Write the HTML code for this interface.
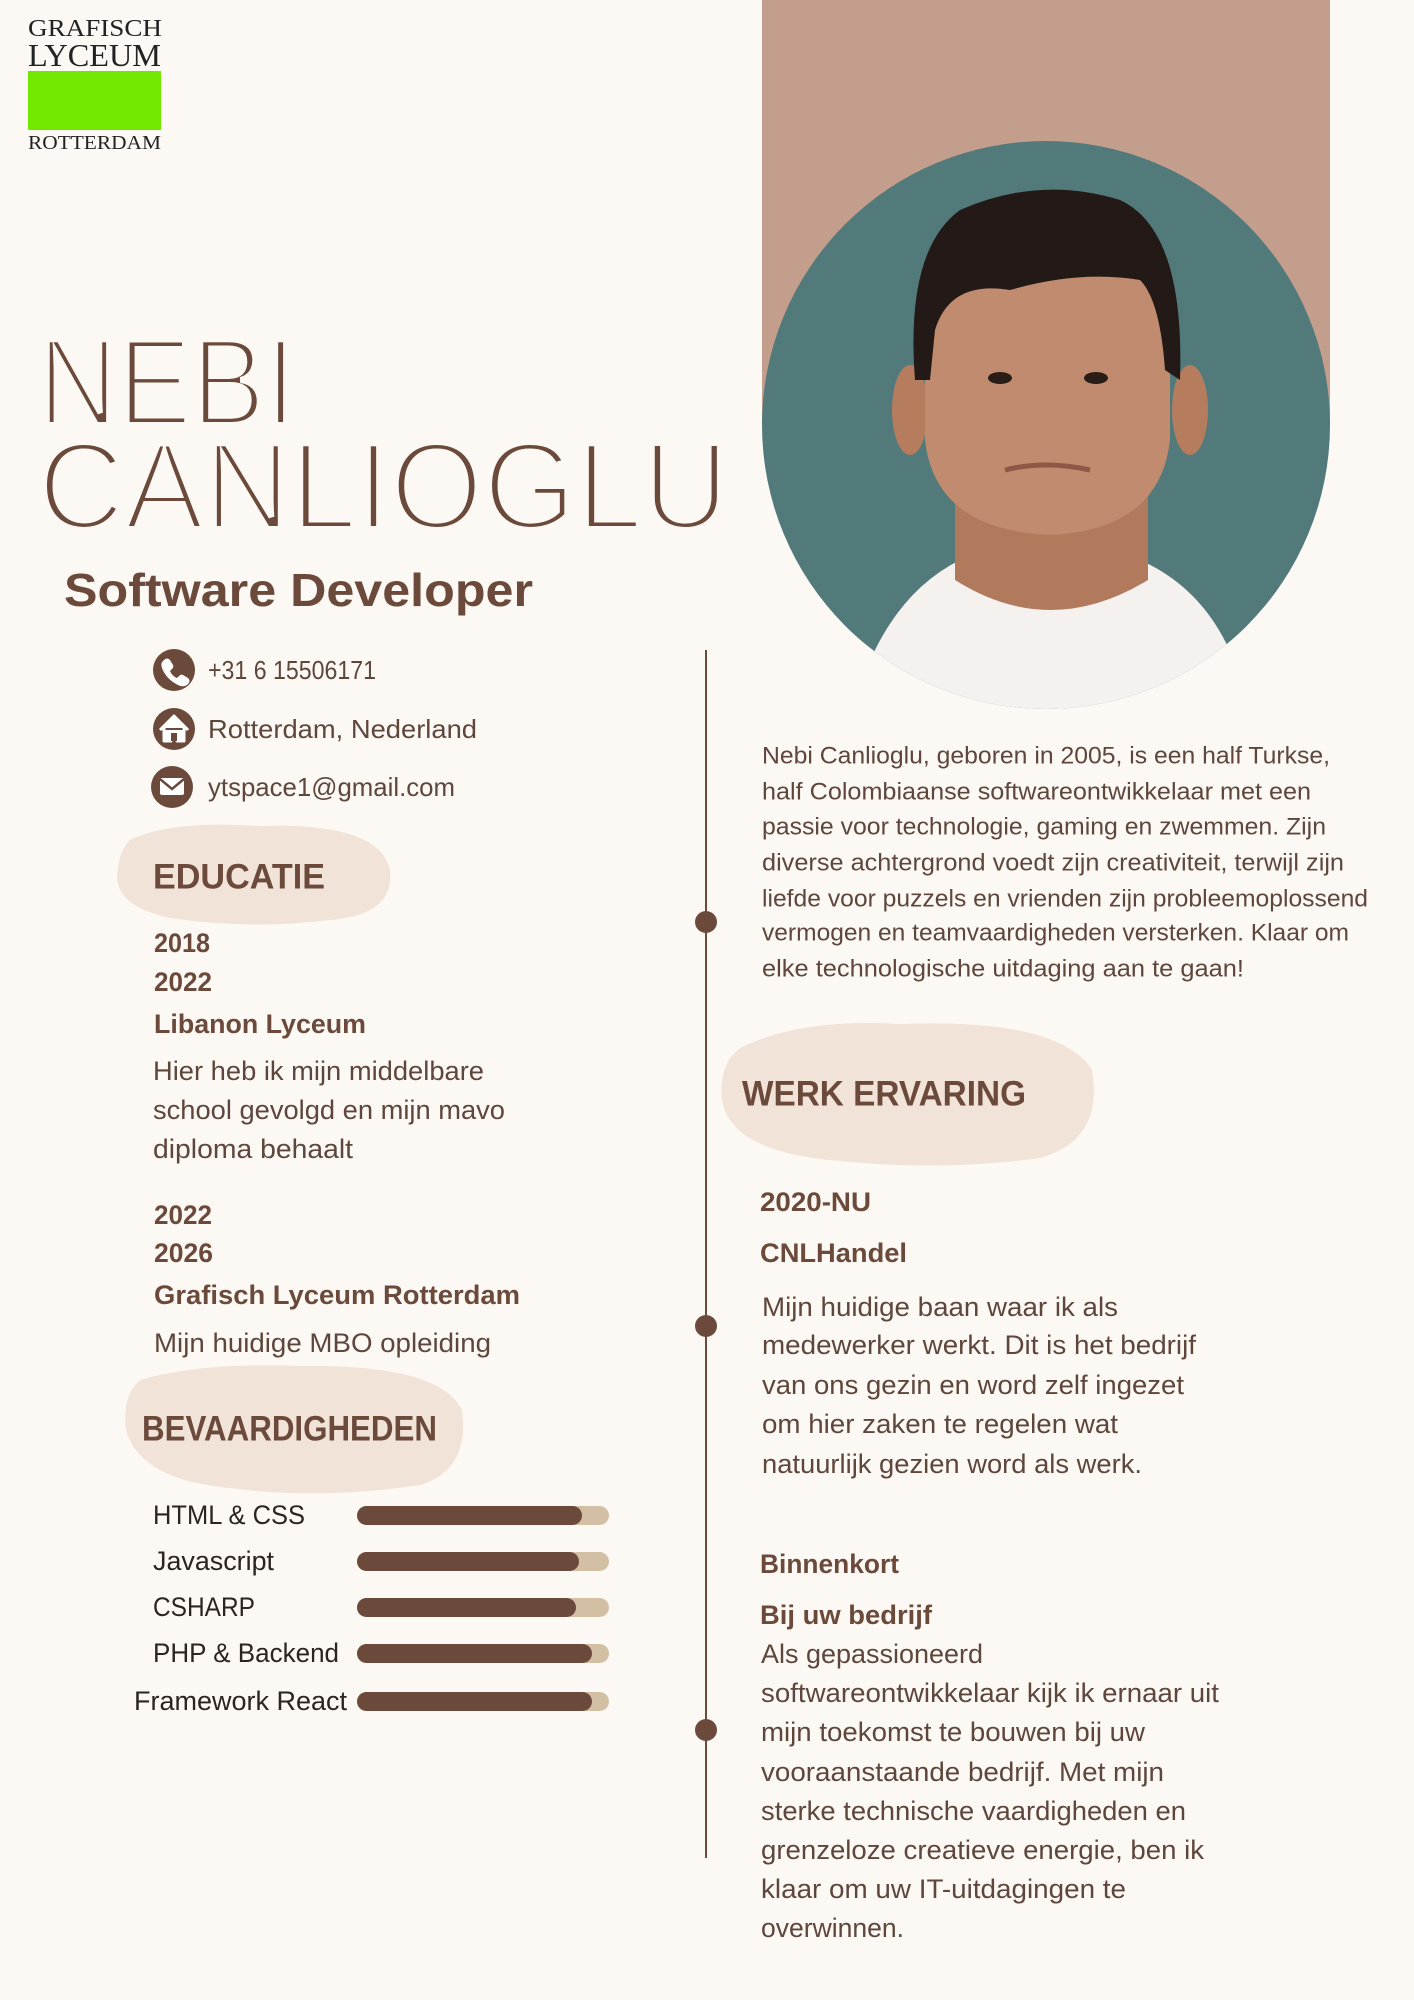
<!DOCTYPE html>
<html><head><meta charset="utf-8"><style>
html,body{margin:0;padding:0;background:#fcf9f4;}
svg{display:block}
text{font-family:"Liberation Sans",sans-serif;dominant-baseline:central}
.b{font-weight:bold;fill:#6b4a3c}
.r{fill:#5e463c}
.k{fill:#2b2421}
</style></head><body>
<svg width="1414" height="2000" viewBox="0 0 1414 2000" xmlns="http://www.w3.org/2000/svg">
<rect width="1414" height="2000" fill="#fcf9f4"/>
<!-- logo -->
<text x="28" y="29" style="font-family:'Liberation Serif',serif" font-size="24" fill="#222" textLength="134" lengthAdjust="spacingAndGlyphs">GRAFISCH</text>
<text x="28" y="55" style="font-family:'Liberation Serif',serif" font-size="32" fill="#222" textLength="133" lengthAdjust="spacingAndGlyphs">LYCEUM</text>
<rect x="28" y="71" width="133" height="59" fill="#72e800"/>
<text x="28" y="143" style="font-family:'Liberation Serif',serif" font-size="20" fill="#222" textLength="133" lengthAdjust="spacingAndGlyphs">ROTTERDAM</text>
<!-- photo -->
<rect x="762" y="0" width="568" height="425" fill="#c39e8c"/>
<defs><clipPath id="c"><circle cx="1046" cy="425" r="284"/></clipPath></defs>
<g clip-path="url(#c)">
<rect x="760" y="140" width="572" height="570" fill="#527a7b"/>
<path d="M850 720 Q880 600 960 560 L1140 560 Q1230 600 1250 720 Z" fill="#f4f1ee"/>
<path d="M955 480 L955 580 Q1050 640 1148 580 L1148 480 Z" fill="#b27a5c"/>
<ellipse cx="910" cy="410" rx="18" ry="45" fill="#b57c5e"/>
<ellipse cx="1190" cy="410" rx="18" ry="45" fill="#b57c5e"/>
<path d="M925 300 Q925 220 1040 210 Q1160 215 1170 300 L1170 440 Q1160 530 1050 535 Q935 530 925 440 Z" fill="#c08b6e"/>
<path d="M915 380 Q905 250 960 210 Q1040 175 1120 200 Q1185 230 1180 380 L1165 370 Q1160 300 1140 280 Q1080 270 1010 290 Q950 280 935 330 L930 380 Z" fill="#231a17"/>
<ellipse cx="1000" cy="378" rx="12" ry="6" fill="#2a1c16"/>
<ellipse cx="1096" cy="378" rx="12" ry="6" fill="#2a1c16"/>
<path d="M1005 470 Q1045 460 1090 470" stroke="#8e5846" stroke-width="5" fill="none"/>
</g>
<!-- name -->
<text x="38" y="425" style="dominant-baseline:alphabetic" font-size="124" fill="#6b4a3c" stroke="#fcf9f4" stroke-width="6" textLength="258" lengthAdjust="spacingAndGlyphs">NEBI</text>
<text x="38" y="529" style="dominant-baseline:alphabetic" font-size="124" fill="#6b4a3c" stroke="#fcf9f4" stroke-width="6" textLength="691" lengthAdjust="spacingAndGlyphs">CANLIOGLU</text>
<text x="64" y="590" class="b" font-size="46" textLength="469" lengthAdjust="spacingAndGlyphs">Software Developer</text>
<!-- contact -->
<circle cx="174" cy="670" r="21" fill="#6b4a3c"/>
<path d="M164 660 q3-3 6 0 l3 5 q1 2-1 4 l-2 2 q2 5 7 7 l2-2 q2-2 4-1 l5 3 q3 3 0 6 q-4 4-10 1 q-12-6-16-17 q-2-5 2-8z" fill="#fff"/>
<circle cx="174" cy="729" r="21" fill="#6b4a3c"/>
<path d="M160 730 L174 716 L188 730 M164 728 L164 741 L171 741 L171 734 L177 734 L177 741 L184 741 L184 728" stroke="#fff" stroke-width="3" fill="#fff" stroke-linejoin="round"/>
<rect x="171" y="733" width="6" height="8" fill="#6b4a3c"/>
<circle cx="172" cy="787" r="21" fill="#6b4a3c"/>
<rect x="160" y="778" width="24" height="17" fill="#fff" rx="2"/>
<path d="M160 779 L172 789 L184 779" stroke="#6b4a3c" stroke-width="2.5" fill="none"/>
<text x="208" y="670" class="r" font-size="26" textLength="168" lengthAdjust="spacingAndGlyphs">+31 6 15506171</text>
<text x="208" y="729" class="r" font-size="26" textLength="269" lengthAdjust="spacingAndGlyphs">Rotterdam, Nederland</text>
<text x="208" y="787" class="r" font-size="26" textLength="247" lengthAdjust="spacingAndGlyphs">ytspace1@gmail.com</text>
<!-- timeline -->
<rect x="705" y="650" width="2" height="1208" fill="#6b4a3c"/>
<circle cx="706" cy="922" r="11" fill="#6b4a3c"/>
<circle cx="706" cy="1326" r="11" fill="#6b4a3c"/>
<circle cx="706" cy="1730" r="11" fill="#6b4a3c"/>
<!-- educatie -->
<path d="M130 840 Q170 820 260 826 Q380 822 390 870 Q395 915 330 920 Q250 930 170 918 Q110 905 118 868 Q120 850 130 840Z" fill="#f2e3d8"/>
<text x="153" y="877" class="b" font-size="35" textLength="172" lengthAdjust="spacingAndGlyphs">EDUCATIE</text>
<text x="154" y="943" class="b" font-size="27" textLength="56" lengthAdjust="spacingAndGlyphs">2018</text>
<text x="154" y="982" class="b" font-size="27" textLength="58" lengthAdjust="spacingAndGlyphs">2022</text>
<text x="154" y="1024" class="b" font-size="27" textLength="212" lengthAdjust="spacingAndGlyphs">Libanon Lyceum</text>
<text x="153" y="1071" class="r" font-size="27" textLength="331" lengthAdjust="spacingAndGlyphs">Hier heb ik mijn middelbare</text>
<text x="153" y="1110" class="r" font-size="27" textLength="352" lengthAdjust="spacingAndGlyphs">school gevolgd en mijn mavo</text>
<text x="153" y="1149" class="r" font-size="27" textLength="200" lengthAdjust="spacingAndGlyphs">diploma behaalt</text>
<text x="154" y="1215" class="b" font-size="27" textLength="58" lengthAdjust="spacingAndGlyphs">2022</text>
<text x="154" y="1253" class="b" font-size="27" textLength="59" lengthAdjust="spacingAndGlyphs">2026</text>
<text x="154" y="1295" class="b" font-size="27" textLength="366" lengthAdjust="spacingAndGlyphs">Grafisch Lyceum Rotterdam</text>
<text x="154" y="1343" class="r" font-size="27" textLength="337" lengthAdjust="spacingAndGlyphs">Mijn huidige MBO opleiding</text>
<!-- bevaardigheden -->
<path d="M140 1380 Q200 1362 300 1366 Q440 1364 462 1410 Q470 1470 420 1485 Q320 1500 230 1488 Q140 1480 126 1430 Q122 1395 140 1380Z" fill="#f2e3d8"/>
<text x="142" y="1429" class="b" font-size="35" textLength="295" lengthAdjust="spacingAndGlyphs">BEVAARDIGHEDEN</text>
<text x="153" y="1515" class="k" font-size="27" textLength="152" lengthAdjust="spacingAndGlyphs">HTML &amp; CSS</text>
<text x="153" y="1561" class="k" font-size="27" textLength="121" lengthAdjust="spacingAndGlyphs">Javascript</text>
<text x="153" y="1607" class="k" font-size="27" textLength="102" lengthAdjust="spacingAndGlyphs">CSHARP</text>
<text x="153" y="1653" class="k" font-size="27" textLength="186" lengthAdjust="spacingAndGlyphs">PHP &amp; Backend</text>
<text x="134" y="1701" class="k" font-size="27" textLength="213" lengthAdjust="spacingAndGlyphs">Framework React</text>
<g>
<rect x="357" y="1506" width="252" height="19" rx="9.5" fill="#d3bfa3"/><rect x="357" y="1506" width="225" height="19" rx="9.5" fill="#6b4a3c"/>
<rect x="357" y="1552" width="252" height="19" rx="9.5" fill="#d3bfa3"/><rect x="357" y="1552" width="222" height="19" rx="9.5" fill="#6b4a3c"/>
<rect x="357" y="1598" width="252" height="19" rx="9.5" fill="#d3bfa3"/><rect x="357" y="1598" width="219" height="19" rx="9.5" fill="#6b4a3c"/>
<rect x="357" y="1644" width="252" height="19" rx="9.5" fill="#d3bfa3"/><rect x="357" y="1644" width="235" height="19" rx="9.5" fill="#6b4a3c"/>
<rect x="357" y="1692" width="252" height="19" rx="9.5" fill="#d3bfa3"/><rect x="357" y="1692" width="235" height="19" rx="9.5" fill="#6b4a3c"/>
</g>
<!-- about -->
<text x="762" y="756" class="r" font-size="24" textLength="568" lengthAdjust="spacingAndGlyphs">Nebi Canlioglu, geboren in 2005, is een half Turkse,</text>
<text x="762" y="792" class="r" font-size="24" textLength="549" lengthAdjust="spacingAndGlyphs">half Colombiaanse softwareontwikkelaar met een</text>
<text x="762" y="827" class="r" font-size="24" textLength="564" lengthAdjust="spacingAndGlyphs">passie voor technologie, gaming en zwemmen. Zijn</text>
<text x="762" y="863" class="r" font-size="24" textLength="582" lengthAdjust="spacingAndGlyphs">diverse achtergrond voedt zijn creativiteit, terwijl zijn</text>
<text x="762" y="899" class="r" font-size="24" textLength="606" lengthAdjust="spacingAndGlyphs">liefde voor puzzels en vrienden zijn probleemoplossend</text>
<text x="762" y="933" class="r" font-size="24" textLength="587" lengthAdjust="spacingAndGlyphs">vermogen en teamvaardigheden versterken. Klaar om</text>
<text x="762" y="969" class="r" font-size="24" textLength="482" lengthAdjust="spacingAndGlyphs">elke technologische uitdaging aan te gaan!</text>
<!-- werk -->
<path d="M740 1048 Q800 1018 900 1024 Q1060 1018 1092 1070 Q1104 1140 1040 1158 Q940 1172 830 1160 Q730 1150 722 1100 Q718 1065 740 1048Z" fill="#f2e3d8"/>
<text x="742" y="1094" class="b" font-size="35" textLength="284" lengthAdjust="spacingAndGlyphs">WERK ERVARING</text>
<text x="760" y="1202" class="b" font-size="27" textLength="111" lengthAdjust="spacingAndGlyphs">2020-NU</text>
<text x="760" y="1253" class="b" font-size="27" textLength="147" lengthAdjust="spacingAndGlyphs">CNLHandel</text>
<text x="762" y="1307" class="r" font-size="27" textLength="356" lengthAdjust="spacingAndGlyphs">Mijn huidige baan waar ik als</text>
<text x="762" y="1345" class="r" font-size="27" textLength="434" lengthAdjust="spacingAndGlyphs">medewerker werkt. Dit is het bedrijf</text>
<text x="762" y="1385" class="r" font-size="27" textLength="422" lengthAdjust="spacingAndGlyphs">van ons gezin en word zelf ingezet</text>
<text x="762" y="1424" class="r" font-size="27" textLength="356" lengthAdjust="spacingAndGlyphs">om hier zaken te regelen wat</text>
<text x="762" y="1464" class="r" font-size="27" textLength="380" lengthAdjust="spacingAndGlyphs">natuurlijk gezien word als werk.</text>
<text x="760" y="1564" class="b" font-size="27" textLength="139" lengthAdjust="spacingAndGlyphs">Binnenkort</text>
<text x="760" y="1615" class="b" font-size="27" textLength="172" lengthAdjust="spacingAndGlyphs">Bij uw bedrijf</text>
<text x="761" y="1654" class="r" font-size="27" textLength="222" lengthAdjust="spacingAndGlyphs">Als gepassioneerd</text>
<text x="761" y="1693" class="r" font-size="27" textLength="458" lengthAdjust="spacingAndGlyphs">softwareontwikkelaar kijk ik ernaar uit</text>
<text x="761" y="1732" class="r" font-size="27" textLength="384" lengthAdjust="spacingAndGlyphs">mijn toekomst te bouwen bij uw</text>
<text x="761" y="1772" class="r" font-size="27" textLength="403" lengthAdjust="spacingAndGlyphs">vooraanstaande bedrijf. Met mijn</text>
<text x="761" y="1811" class="r" font-size="27" textLength="425" lengthAdjust="spacingAndGlyphs">sterke technische vaardigheden en</text>
<text x="761" y="1850" class="r" font-size="27" textLength="443" lengthAdjust="spacingAndGlyphs">grenzeloze creatieve energie, ben ik</text>
<text x="761" y="1889" class="r" font-size="27" textLength="365" lengthAdjust="spacingAndGlyphs">klaar om uw IT-uitdagingen te</text>
<text x="761" y="1928" class="r" font-size="27" textLength="143" lengthAdjust="spacingAndGlyphs">overwinnen.</text>
</svg>
</body></html>
